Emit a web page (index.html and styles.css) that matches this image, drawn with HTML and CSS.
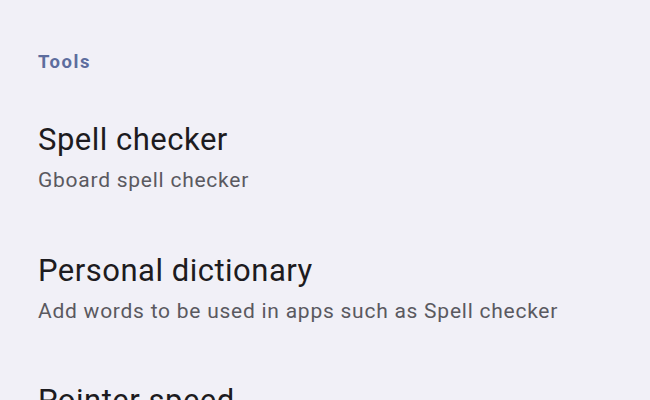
FILE: index.html
```
<!DOCTYPE html>
<html>
<head>
<meta charset="utf-8">
<link rel="stylesheet" href="styles.css">
</head>
<body>
<div class="screen">
  <div class="section-title">Tools</div>
  <div class="item">
    <div class="item-title">Spell checker</div>
    <div class="item-sub">Gboard spell checker</div>
  </div>
  <div class="item">
    <div class="item-title">Personal dictionary</div>
    <div class="item-sub">Add words to be used in apps such as Spell checker</div>
  </div>
  <div class="item">
    <div class="item-title">Pointer speed</div>
  </div>
</div>
</body>
</html>
```
FILE: styles.css
```
html, body {
  margin: 0;
  padding: 0;
  background: #f1f0f7;
}
.screen {
  width: 650px;
  height: 400px;
  overflow: hidden;
  padding: 50px 38px 0;
  box-sizing: border-box;
  font-family: Roboto, "Noto Sans", sans-serif;
}
.section-title {
  font-size: 18.5px;
  font-weight: 700;
  letter-spacing: 1.6px;
  color: #5d6d9e;
  line-height: 24px;
  margin-bottom: 46px;
}
.item {
  margin-bottom: 56.5px;
}
.item-title {
  font-size: 31px;
  letter-spacing: 0.5px;
  color: #1d1b20;
  line-height: 40px;
}
.item-sub {
  margin-top: 6px;
  font-size: 21px;
  letter-spacing: 0.75px;
  color: #5a5960;
  line-height: 28px;
}
```
